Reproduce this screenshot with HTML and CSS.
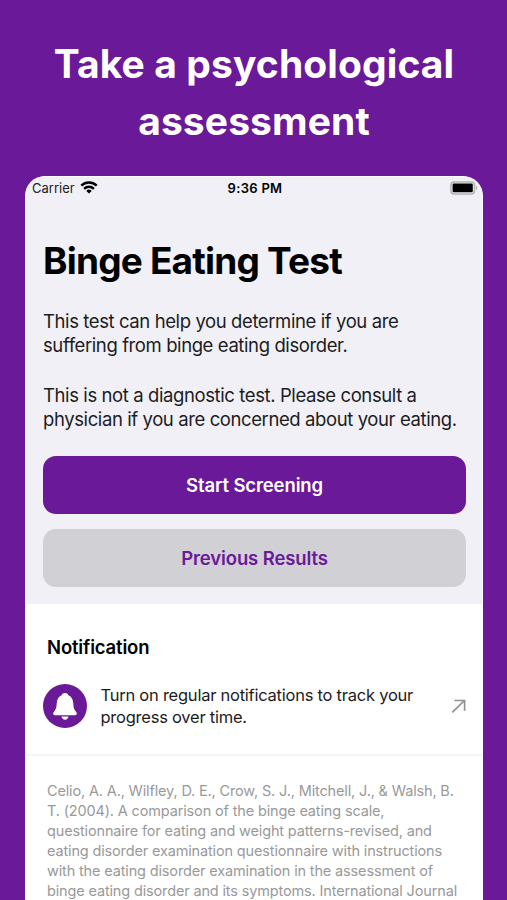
FILE: index.html
```html
<!DOCTYPE html>
<html lang="en">
<head>
    <meta charset="UTF-8">
    <meta name="viewport" content="width=device-width, initial-scale=1.0">
    <title>Binge Eating Test</title>
    <link rel="stylesheet" href="styles.css">
</head>
<body>
    <h1 class="headline">Take a psychological<br>assessment</h1>

    <div class="phone">
        <!-- Status bar -->
        <div class="status-bar">
            <div class="carrier">
                <span>Carrier</span>
                <svg class="wifi" width="18" height="13" viewBox="0 0 18 13" fill="none" stroke="#000" stroke-width="2.4">
                    <path d="M1.3 4.6a11 11 0 0 1 15.4 0"></path>
                    <path d="M4.1 7.8a7 7 0 0 1 9.8 0"></path>
                    <path d="M9 12.6L6.3 9.9a3.9 3.9 0 0 1 5.4 0z" fill="#000" stroke="none"></path>
                </svg>
            </div>
            <div class="clock">9:36 PM</div>
            <svg class="battery" width="28" height="14" viewBox="0 0 28 14">
                <rect x="0.9" y="0.9" width="23.6" height="12" rx="3.2" fill="none" stroke="#b4b4b6" stroke-width="1.5"></rect>
                <rect x="2.6" y="2.6" width="20.2" height="8.6" rx="1.2" fill="#000"></rect>
                <path d="M25.9 4.8a2.3 2.3 0 0 1 0 4.2z" fill="#b4b4b6"></path>
            </svg>
        </div>

        <!-- Intro -->
        <div class="intro">
            <h2 class="title">Binge Eating Test</h2>
            <p class="text">This test can help you determine if you are<br>suffering from binge eating disorder.</p>
            <p class="text">This is not a diagnostic test. Please consult a<br>physician if you are concerned about your eating.</p>
            <button class="button primary">Start Screening</button>
            <button class="button secondary">Previous Results</button>
        </div>

        <!-- Notification -->
        <div class="notification">
            <h3 class="subtitle">Notification</h3>
            <div class="notification-row">
                <div class="bell">
                    <svg width="44" height="44" viewBox="0 0 44 44" fill="#fff">
                        <path d="M22 9c1.7 0 2.8.9 3.4 2.3 3.2 1.4 4.7 4.4 4.9 8.2.2 4.5 1 6.2 2.5 8 .7.9 1 1.4 1 2.1 0 1-.6 1.6-1.7 1.6H11.9c-1.1 0-1.7-.6-1.7-1.6 0-.7.3-1.2 1-2.1 1.5-1.8 2.3-3.5 2.5-8 .2-3.8 1.7-6.8 4.9-8.2C19.2 9.9 20.3 9 22 9z"></path>
                        <path d="M18.5 32.5h7c-.3 2-1.7 3.2-3.5 3.2s-3.2-1.2-3.5-3.2z"></path>
                    </svg>
                </div>
                <p class="notification-text">Turn on regular notifications to track your<br>progress over time.</p>
                <svg class="arrow" width="15" height="15" viewBox="0 0 15 15" fill="none" stroke="#929292" stroke-width="1.7">
                    <path d="M1.3 13.4L13.3 1.6"></path>
                    <path d="M3.4 1.5h10.2v10.2"></path>
                </svg>
            </div>
        </div>

        <!-- Reference -->
        <p class="citation">Celio, A. A., Wilfley, D. E., Crow, S. J., Mitchell, J., &amp; Walsh, B.<br>T. (2004). A comparison of the binge eating scale,<br>questionnaire for eating and weight patterns-revised, and<br>eating disorder examination questionnaire with instructions<br>with the eating disorder examination in the assessment of<br>binge eating disorder and its symptoms. International Journal</p>
    </div>
</body>
</html>
```
FILE: styles.css
```css
* {
    box-sizing: border-box;
}

body {
    margin: 0;
    height: 900px;
    overflow: hidden;
    background-color: #6a1998;
    font-family: Inter, "Liberation Sans", sans-serif;
    white-space: nowrap;
}

h1, h2, h3, p {
    margin: 0;
}

.headline {
    height: 176px;
    padding: 35px 0 0 1px;
    text-align: center;
    font-size: 39px;
    line-height: 57px;
    font-weight: 700;
    letter-spacing: 0.1px;
    color: #fff;
}

.phone {
    width: 458px;
    height: 724px;
    margin-left: 25px;
    border: 1px solid #fff;
    border-bottom: none;
    border-radius: 20px 20px 0 0;
    background-color: #fff;
    overflow: hidden;
}

.status-bar {
    display: grid;
    grid-template-columns: 1fr auto 1fr;
    align-items: center;
    height: 21px;
    padding: 0 4px 0 6px;
    background-color: #f1f0f6;
    font-size: 13px;
}

.carrier {
    display: flex;
    align-items: center;
    gap: 5px;
    color: #222;
}

.clock {
    font-weight: 600;
    letter-spacing: 0.3px;
}

.battery {
    justify-self: end;
}

.intro {
    height: 406px;
    padding: 40px 17px 0;
    background-color: #f1f0f6;
}

.title {
    margin-bottom: 25px;
    font-size: 37px;
    line-height: 46px;
    font-weight: 700;
    letter-spacing: -0.8px;
    color: #000;
}

.text {
    margin-bottom: 24.8px;
    font-size: 18.5px;
    line-height: 24.4px;
    letter-spacing: -0.4px;
    color: #1c1c1e;
}

.button {
    display: block;
    width: 423px;
    height: 58px;
    margin-bottom: 14.4px;
    border: none;
    border-radius: 13px;
    font-family: inherit;
    font-size: 18.5px;
    font-weight: 600;
    letter-spacing: -0.12px;
}

.primary {
    background-color: #6a1998;
    color: #fff;
}

.secondary {
    background-color: #d1d0d5;
    color: #6a1998;
}

.notification {
    height: 152px;
    padding: 31px 16px 0 17px;
    border-bottom: 2px solid #f5f5f6;
}

.subtitle {
    margin: 0 0 25px 4px;
    font-size: 18.5px;
    line-height: 24px;
    font-weight: 600;
    letter-spacing: -0.17px;
    color: #000;
}

.notification-row {
    display: flex;
    align-items: center;
}

.bell {
    width: 44px;
    height: 44px;
    margin-right: 13.5px;
    border-radius: 50%;
    background-color: #6a1998;
}

.bell svg {
    display: block;
}

.notification-text {
    flex: 1;
    font-size: 16.5px;
    line-height: 22px;
    letter-spacing: -0.24px;
    color: #1c1c1e;
}

.citation {
    padding: 25px 0 0 21px;
    font-size: 14.5px;
    line-height: 19.9px;
    letter-spacing: -0.15px;
    color: #999;
}
```
